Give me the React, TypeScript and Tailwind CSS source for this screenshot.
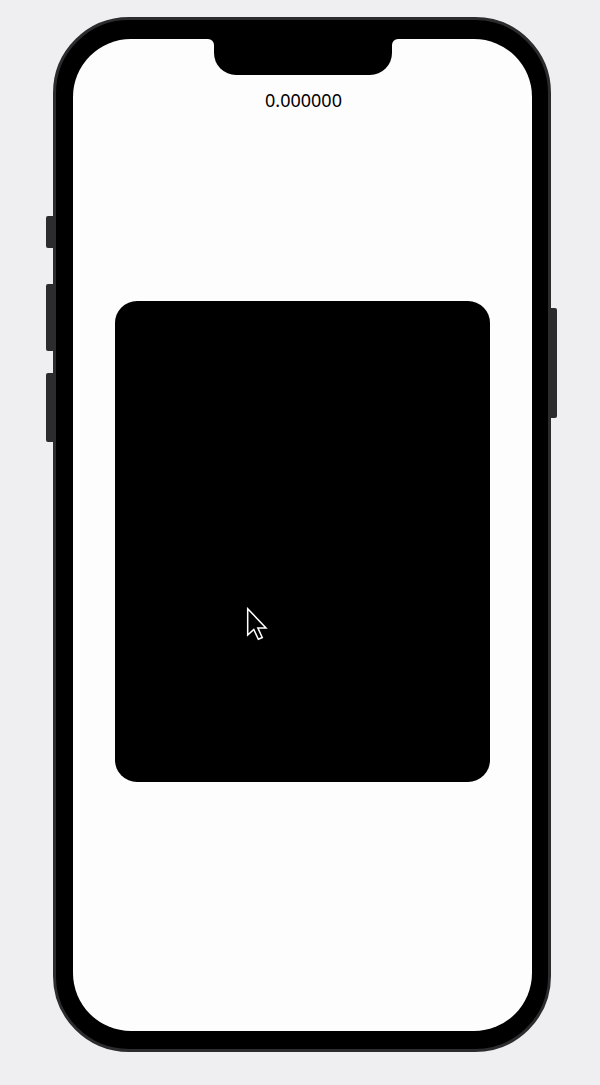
export default function App() {
  return (
    <div className="min-h-[1085px] w-[600px] bg-[#efeef0] pt-[17px] pl-[53px]">
      {/* téléphone */}
      <div className="relative w-[498px] h-[1035px] rounded-[76px] bg-black border-[3px] border-[#2c2b2e] pt-[19px] pl-[17px]">
        {/* boutons latéraux */}
        <div className="absolute left-[-10px] top-[196px] w-[7px] h-[32px] rounded-l-[2px] bg-[#2c2b2e]" />
        <div className="absolute left-[-10px] top-[264px] w-[7px] h-[67px] rounded-l-[2px] bg-[#2c2b2e]" />
        <div className="absolute left-[-10px] top-[353px] w-[7px] h-[69px] rounded-l-[2px] bg-[#2c2b2e]" />
        <div className="absolute right-[-9px] top-[288px] w-[6px] h-[110px] rounded-r-[2px] bg-[#2c2b2e]" />

        {/* écran */}
        <div className="w-[459px] h-[992px] rounded-[58px] bg-[#fefdfe] flex flex-col items-center">
          {/* encoche */}
          <div className="flex items-start">
            <div className="w-[6px] h-[6px] bg-black">
              <div className="w-full h-full rounded-tr-[6px] bg-[#fefdfe]" />
            </div>
            <div className="w-[178px] h-[36px] bg-black rounded-b-[22px]" />
            <div className="w-[6px] h-[6px] bg-black">
              <div className="w-full h-full rounded-tl-[6px] bg-[#fefdfe]" />
            </div>
          </div>

          <p className="mt-[13px] text-[18px] leading-[24px] text-black font-['Noto_Sans',sans-serif] ml-[2px]">
            0.000000
          </p>

          {/* carte */}
          <div className="relative mt-[189px] w-[375px] h-[481px] rounded-[22px] bg-black">
            <svg
              className="absolute left-[131px] top-[306px]"
              width="22"
              height="34"
              viewBox="0 0 13 20"
            >
              <path
                d="M1 1 L1 16.5 L4.6 13.2 L7.3 19 L9.6 18 L7 12.3 L11.8 12.3 Z"
                fill="black"
                stroke="white"
                strokeWidth="0.9"
                strokeLinejoin="miter"
              />
            </svg>
          </div>
        </div>
      </div>
    </div>
  );
}
